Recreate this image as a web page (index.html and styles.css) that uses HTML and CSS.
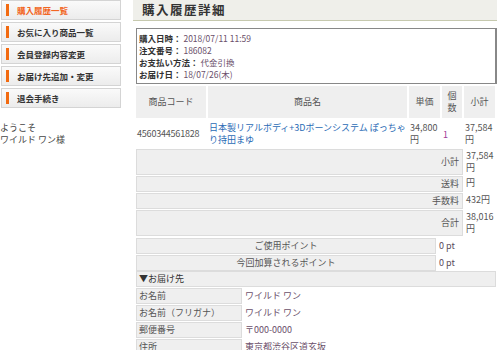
FILE: index.html
```html
<!DOCTYPE html>
<html lang="ja">
<head>
<meta charset="utf-8">
<link rel="stylesheet" href="styles.css">
</head>
<body>
<div class="page">
  <aside class="side">
    <ul class="menu">
      <li class="active"><span class="bar"></span>購入履歴一覧</li>
      <li><span class="bar"></span>お気に入り商品一覧</li>
      <li><span class="bar"></span>会員登録内容変更</li>
      <li><span class="bar"></span>お届け先追加・変更</li>
      <li><span class="bar"></span>退会手続き</li>
    </ul>
    <p class="welcome">ようこそ<br>ワイルド ワン様</p>
  </aside>
  <main class="main">
    <h1 class="title">購入履歴詳細</h1>
    <div class="info">
      <div><b>購入日時：</b> 2018/07/11 11:59</div>
      <div><b>注文番号：</b> 186082</div>
      <div><b>お支払い方法：</b> 代金引換</div>
      <div><b>お届け日：</b> 18/07/26(木)</div>
    </div>
    <table class="items">
      <colgroup>
        <col class="c1"><col class="c2"><col class="c3"><col class="c4"><col class="c5">
      </colgroup>
      <tr class="head">
        <th>商品コード</th><th>商品名</th><th>単価</th><th>個<br>数</th><th>小計</th>
      </tr>
      <tr class="row">
        <td class="code">4560344561828</td>
        <td><a href="#">日本製リアルボディ+3Dボーンシステム ぽっちゃり持田まゆ</a></td>
        <td>34,800<br>円</td>
        <td class="qty">1</td>
        <td>37,584<br>円</td>
      </tr>
      <tr class="sum"><th colspan="4">小計</th><td>37,584<br>円</td></tr>
      <tr class="sum"><th colspan="4">送料</th><td>円</td></tr>
      <tr class="sum"><th colspan="4">手数料</th><td>432円</td></tr>
      <tr class="sum"><th colspan="4">合計</th><td>38,016<br>円</td></tr>
    </table>
    <table class="points">
      <tr><th>ご使用ポイント</th><td>0 pt</td></tr>
      <tr><th>今回加算されるポイント</th><td>0 pt</td></tr>
    </table>
    <table class="ship">
      <tr><th colspan="2" class="shiphead">▼お届け先</th></tr>
      <tr><th>お名前</th><td>ワイルド ワン</td></tr>
      <tr><th>お名前（フリガナ）</th><td>ワイルド ワン</td></tr>
      <tr><th>郵便番号</th><td>〒000-0000</td></tr>
      <tr><th>住所</th><td>東京都渋谷区道玄坂</td></tr>
    </table>
  </main>
</div>
</body>
</html>
```
FILE: styles.css
```css
* { box-sizing: border-box; }
body {
  margin: 0;
  font-family: "Noto Sans CJK JP", "Noto Sans", sans-serif;
  font-size: 9px;
  color: #555;
  background: #fff;
}
.page { display: flex; align-items: flex-start; }
.side { width: 121px; flex: none; }
.menu { list-style: none; margin: 0; padding: 0; }
.menu li {
  display: flex;
  align-items: center;
  height: 20px;
  margin: 0 0 2px 1px;
  border: 1px solid #d4d4d4;
  background: linear-gradient(#fafafa, #ececec);
  font-weight: bold;
  color: #333;
  font-size: 8.5px;
  padding-left: 4px;
}
.menu li.active { color: #f26522; }
.menu .bar {
  width: 3px;
  height: 12px;
  background: #f26a10;
  margin-right: 8px;
}
.welcome {
  margin: 14px 0 0;
  font-size: 9px;
  line-height: 12px;
  color: #444;
}
.main { flex: 1; margin-left: 12px; margin-right: 3px; }
.title {
  margin: 0;
  height: 21px;
  padding-left: 9px;
  font-size: 12.5px;
  line-height: 20px;
  letter-spacing: 1.5px;
  color: #333;
  background: #efefea;
  border-bottom: 1px solid #c6c9ae;
}
.info {
  margin: 7px 0 1px 3px;
  border: 1px solid #888;
  border-right-width: 2px;
  padding: 3px 3px 3px 2px;
  line-height: 12px;
  font-size: 8.5px;
  color: #6a4f6a;
}
.info b { color: #333; }
table { border-collapse: separate; border-spacing: 1px; width: calc(100% - 2px); margin-left: 2px; }
th, td { font-weight: normal; padding: 1px 2px; line-height: 12px; vertical-align: middle; }
.items col.c1 { width: 71px; }
.items col.c2 { width: 200px; }
.items col.c3 { width: 32px; }
.items col.c4 { width: 21px; }
.items .head th {
  background: #efefef;
  border-right: 1px solid #fff;
  height: 32px;
  color: #555;
}
.items .row td { vertical-align: top; padding: 3px 1px 1px; height: 29px; }
.items .row td.code { vertical-align: middle; padding-top: 1px; }
.items .code { color: #555; padding-left: 0; letter-spacing: -0.2px; }
.items a { color: #2a6bb5; text-decoration: none; }
.items .qty { vertical-align: middle !important; color: #a03b98; padding-left: 2px; }
.sum th {
  text-align: right;
  background: #efefef;
  border: 1px solid #dcdcdc;
  padding-right: 3px;
}
.sum td { vertical-align: top; padding: 1px 2px; }
.points th {
  background: #efefef;
  border: 1px solid #dcdcdc;
  text-align: center;
  width: 300px;
}
.points td { color: #5a4a5a; }
.ship { margin-top: -2px; }
.ship th {
  text-align: left;
  width: 106px;
  background: #efefef;
  border: 1px solid #dcdcdc;
  color: #555;
}
.ship .shiphead { width: auto; color: #333; }
.ship td { color: #6a4f6a; }
```
